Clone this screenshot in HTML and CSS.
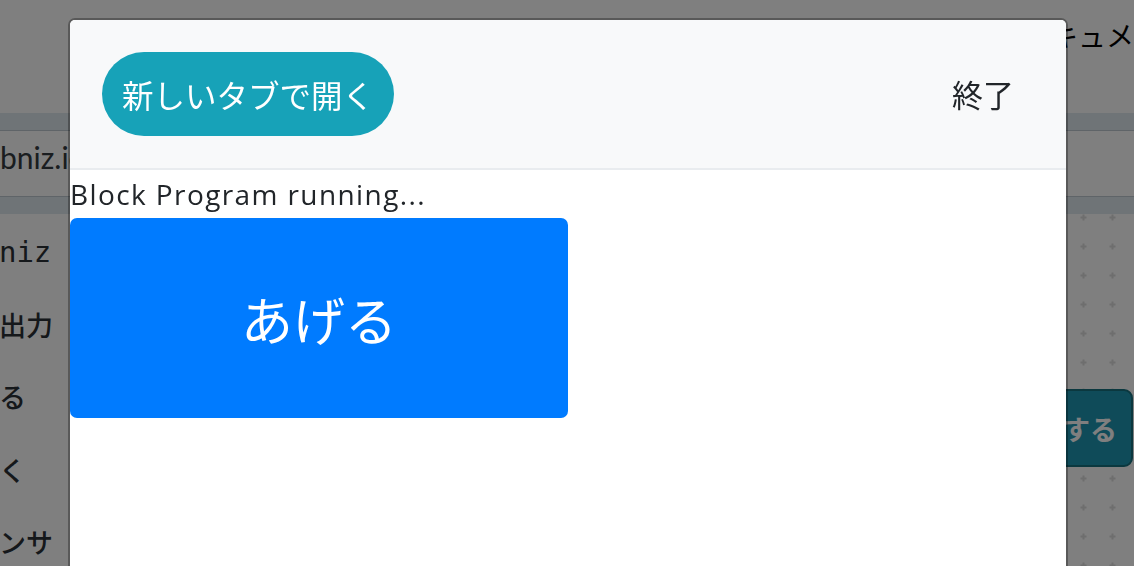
FILE: index.html
```html
<!DOCTYPE html>
<html lang="ja">
<head>
    <meta charset="UTF-8">
    <meta name="viewport" content="width=device-width, initial-scale=1.0">
    <title>obniz ブロックプログラム</title>
    <link rel="stylesheet" href="styles.css">
</head>
<body>
    <div class="pagina">
        <nav class="topnav">
            <span class="marca">obniz</span>
            <a class="nav-link">ドキュメント</a>
        </nav>
        <div class="toolbar"></div>
        <div class="urlbar">
            <span class="url">obniz.io/ja/console/blocks</span>
        </div>
        <div class="tabbar"></div>
        <main class="editor">
            <ul class="categorias">
                <li class="mono">obniz</li>
                <li>入出力</li>
                <li>見る</li>
                <li>動く</li>
                <li>センサ</li>
            </ul>
            <section class="workspace">
                <button class="btn-run">実行する</button>
            </section>
        </main>
    </div>

    <div class="backdrop"></div>

    <div class="modal">
        <div class="modal-header">
            <button class="btn-open">新しいタブで開く</button>
            <button class="btn-close">終了</button>
        </div>
        <div class="modal-body">
            <p class="estado">Block Program running...</p>
            <button class="btn-push">あげる</button>
        </div>
    </div>
</body>
</html>
```

FILE: styles.css
```css
body {
    margin: 0;
    height: 100vh;
    overflow: hidden;
    background: #fff;
    color: #343a40;
    font-family: "Open Sans", "Noto Sans CJK JP", sans-serif;
}
.topnav {
    height: 113px;
    display: grid;
    grid-template-columns: 1fr 112px;
    align-items: start;
}
.marca {
    visibility: hidden;
}
.nav-link {
    padding-top: 14px;
    font-family: "Noto Sans CJK JP", sans-serif;
    font-size: 28px;
    line-height: 42px;
    color: #000;
    white-space: nowrap;
}
.toolbar {
    height: 17px;
    background: #dee9ee;
    border-bottom: 1px solid #bec9d0;
}
.urlbar {
    height: 65px;
    display: flex;
    align-items: center;
    border-bottom: 1px solid #bec9d0;
    overflow: hidden;
}
.url {
    margin-left: -17px;
    margin-top: -14px;
    font-family: Lato, sans-serif;
    font-size: 30px;
    color: #343a40;
    white-space: nowrap;
}
.tabbar {
    height: 17px;
    background: #dee9ee;
}
.editor {
    display: grid;
    grid-template-columns: 200px 1fr;
    height: 360px;
}
.categorias {
    list-style: none;
    margin: 0 0 0 -28px;
    padding: 2px 0 0;
    font-family: "Noto Sans CJK JP", sans-serif;
    font-size: 27px;
    font-weight: 500;
    color: #2b3036;
}
.categorias li {
    height: 72.5px;
    line-height: 72px;
    white-space: nowrap;
}
.categorias .mono {
    margin-left: -8px;
    font-family: "DejaVu Sans Mono", monospace;
    font-size: 29px;
    font-weight: normal;
}
.workspace {
    display: flex;
    justify-content: flex-end;
    align-items: flex-start;
    padding: 175px 1px 0 0;
    background-image: url("data:image/svg+xml;utf8,<svg xmlns='http://www.w3.org/2000/svg' width='29' height='29'><path d='M11.5 14.5h6M14.5 11.5v6' stroke='%23dcdcdc' stroke-width='2'/></svg>");
    background-size: 29px 29px;
    background-position: -1px 18px;
}
.btn-run {
    height: 78px;
    padding: 0 14px;
    background: #1f97b2;
    border: 2px solid #17707f;
    border-radius: 9px;
    color: #fff;
    font-family: "Noto Sans CJK JP", sans-serif;
    font-size: 27px;
    font-weight: bold;
}
.backdrop {
    position: fixed;
    top: 0;
    left: 0;
    width: 100%;
    height: 100%;
    background: rgba(0, 0, 0, 0.5);
}
.modal {
    position: fixed;
    top: 18px;
    left: 68px;
    width: 1000px;
    height: 620px;
    box-sizing: border-box;
    background: #fff;
    background-clip: padding-box;
    border: 2px solid rgba(0, 0, 0, 0.3);
    border-radius: 7px;
    overflow: hidden;
}
.modal-header {
    display: flex;
    justify-content: space-between;
    align-items: center;
    padding: 32px;
    background: #f8f9fa;
    border-bottom: 2px solid #e9ecef;
}
.btn-open {
    padding: 18px 20px;
    background: #17a2b8;
    border: none;
    border-radius: 42px;
    color: #fff;
    font-family: "Noto Sans CJK JP", sans-serif;
    font-size: 31.5px;
    line-height: 48px;
}
.btn-close {
    padding: 10px 20px;
    background: none;
    border: none;
    color: #212529;
    font-family: "Noto Sans CJK JP", sans-serif;
    font-size: 31px;
    line-height: 48px;
}
.estado {
    margin: 0;
    color: #212529;
    font-size: 28px;
    line-height: 48px;
    letter-spacing: 1.4px;
}
.btn-push {
    display: block;
    width: 498px;
    height: 200px;
    background: #007bff;
    border: none;
    border-radius: 7px;
    color: #fff;
    font-family: "Noto Sans CJK JP", sans-serif;
    font-size: 52px;
}
```
